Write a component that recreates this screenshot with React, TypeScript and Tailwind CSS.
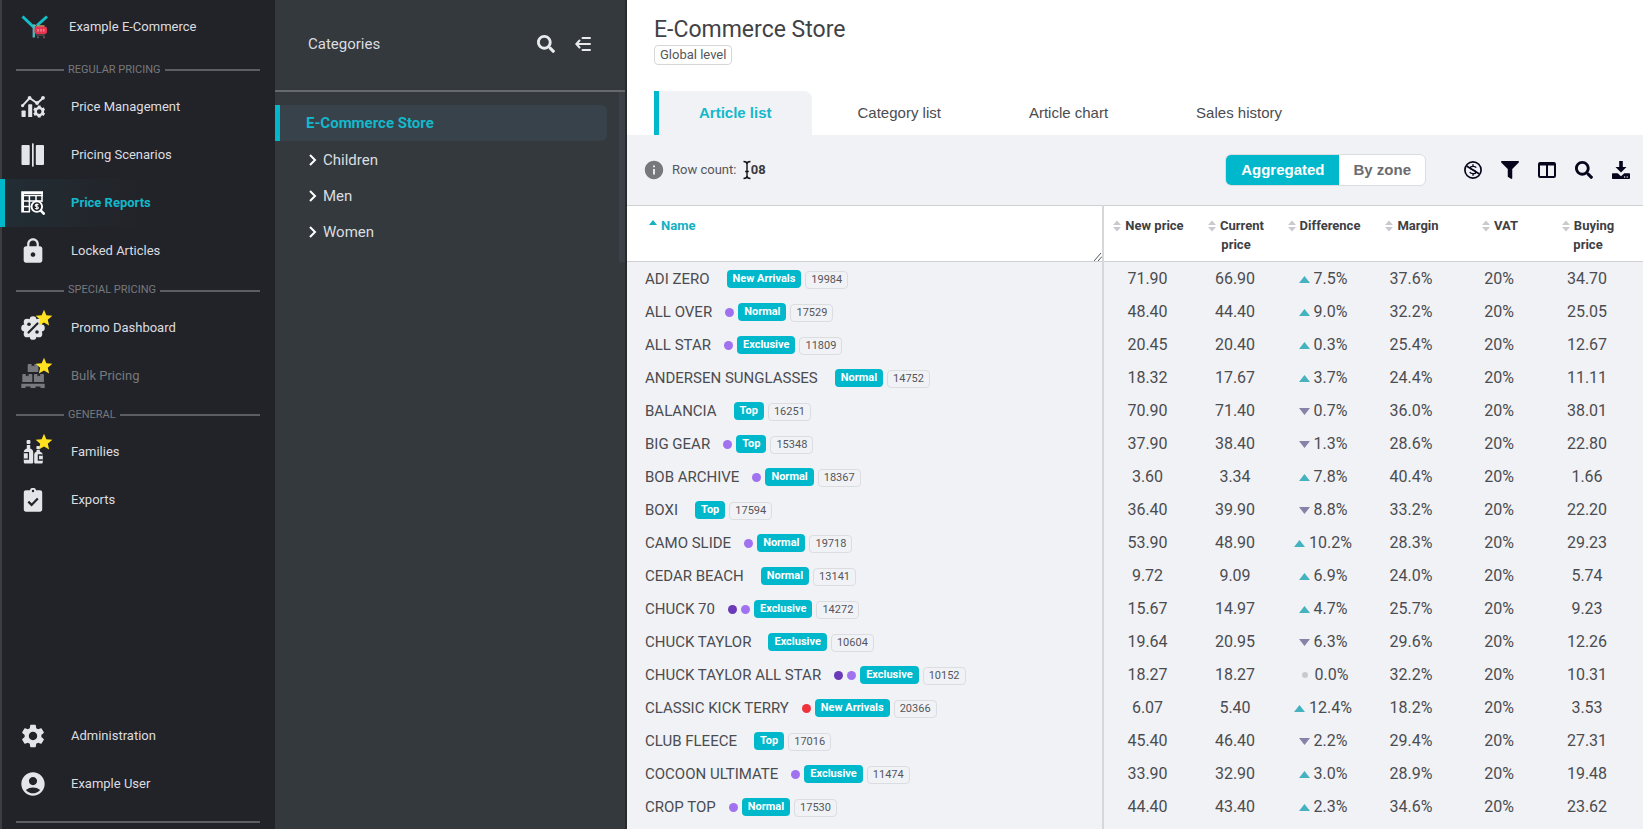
import React from 'react';
import { FaSearch, FaFilter } from 'react-icons/fa';
import { MdAccountCircle, MdLock, MdSettings, MdInfo, MdStar } from 'react-icons/md';

type IconProps = { className?: string };

const LogoIcon: React.FC = () => (
    <svg viewBox="0 0 28 28" className="size-7" aria-hidden="true">
        <path d="M1.500 3.500 12.500 14M26 3.500 16 12.500" stroke="#12bfc9" strokeWidth="3" fill="none" />
        <path d="M12.800 12v12.500" stroke="#4fb3b9" strokeWidth="2.400" />
        <path d="M12 12h2.500l1 2.500" stroke="#b0b4b4" strokeWidth="1" fill="none" />
        <path d="M16 12.200h7.500v2H15z" fill="#b79a5c" />
        <rect x="13.500" y="13.500" width="12.500" height="7.500" rx="2.500" fill="#e5344f" />
        <path d="M17 16v2.600M20 16v2.600M22.800 16v2.600" stroke="#f7a9b5" strokeWidth="1" />
        <path d="M15 22h9" stroke="#6b5357" strokeWidth="1.200" />
        <circle cx="17" cy="24.200" r="1" fill="#63676b" />
        <circle cx="23" cy="24.200" r="1" fill="#63676b" />
    </svg>
);

const ChartGearIcon: React.FC<IconProps> = ({ className }) => (
    <svg viewBox="0 0 24 24" className={className} fill="currentColor" aria-hidden="true">
        <rect x="0.500" y="15.500" width="4.200" height="6.500" rx="0.800" />
        <path d="M7.800 9.200h2.400c.6 0 1 .4 1 1V22H7.200V10c0-.5.3-.8.6-.8Z" />
        <path d="M1.300 10.800 8.600 3l7.600 5.200L22.300 2.800" fill="none" stroke="currentColor" strokeWidth="1.900" />
        <circle cx="8.600" cy="2.800" r="1.900" />
        <circle cx="16" cy="8" r="1.900" />
        <circle cx="22" cy="2.800" r="1.900" />
        <circle cx="1.600" cy="10.600" r="1.600" />
        <circle cx="18.200" cy="16.600" r="3.600" fill="none" stroke="currentColor" strokeWidth="2.600" />
        <path
            d="M18.200 10.600v2.200M18.200 20.400v2.200M13 13.600l1.900 1.100M21.500 18.500l1.900 1.100M13 19.600l1.900-1.100M21.500 14.700l1.900-1.100"
            stroke="currentColor"
            strokeWidth="3"
        />
    </svg>
);

const ScenariosIcon: React.FC<IconProps> = ({ className }) => (
    <svg viewBox="0 0 24 24" className={className} fill="currentColor" aria-hidden="true">
        <rect x="0.500" y="2" width="8.200" height="20" rx="1" />
        <rect x="11" y="0.300" width="1.700" height="23.400" rx="0.600" />
        <rect x="14.800" y="2" width="8.200" height="20" rx="1" />
    </svg>
);

const ReportIcon: React.FC<IconProps> = ({ className }) => (
    <svg viewBox="0 0 24 24" className={className} fill="none" stroke="currentColor" aria-hidden="true">
        <path d="M1.600 21.500V1.600H22" strokeWidth="2.800" />
        <path d="M3 20.800h6M3 15.500h6.500M3 10h18M8.400 4v17M15 4v5.500M21 1v10M3 4.500h19" strokeWidth="1.500" />
        <circle cx="15.800" cy="15.600" r="5.300" strokeWidth="1.900" fill="#222328" />
        <path d="m19.600 19.400 4 4" strokeWidth="2.600" />
        <path d="M17.400 14c-.4-.8-3.200-1-3.200.4s3.200.9 3.200 2.400-2.900 1.300-3.300.3M15.800 12.400v6.400" strokeWidth="1.100" />
    </svg>
);

const PercentIcon: React.FC<IconProps> = ({ className }) => (
    <svg viewBox="0 0 24 24" className={className} aria-hidden="true">
        <g fill="currentColor">
            <circle cx="12" cy="12" r="9.400" />
            <circle cx="12" cy="3.600" r="3.400" />
            <circle cx="17.900" cy="6.100" r="3.400" />
            <circle cx="20.400" cy="12" r="3.400" />
            <circle cx="17.900" cy="17.900" r="3.400" />
            <circle cx="12" cy="20.400" r="3.400" />
            <circle cx="6.100" cy="17.900" r="3.400" />
            <circle cx="3.600" cy="12" r="3.400" />
            <circle cx="6.100" cy="6.100" r="3.400" />
        </g>
        <path d="m7.500 16.500 9-9" stroke="#222328" strokeWidth="2.200" strokeLinecap="round" />
        <circle cx="8" cy="8.200" r="1.800" fill="#222328" />
        <circle cx="16" cy="16" r="1.800" fill="#222328" />
    </svg>
);

const PalletIcon: React.FC<IconProps> = ({ className }) => (
    <svg viewBox="0 0 24 24" className={className} fill="currentColor" aria-hidden="true">
        <path d="M7.600 0h3v2.400l1.400-.8 1.400.8V0h3c.5 0 .9.4.9.9v7.200H6.700V.9c0-.5.4-.9.9-.9Z" />
        <path d="M2.200 10h2.600v2.400l1.400-.8 1.400.8V10h2.800c.5 0 .9.4.9.9V18h-10v-7.100c0-.5.4-.9.9-.9Z" />
        <path d="M13.800 10h2.600v2.400l1.400-.8 1.400.8V10H22c.5 0 .9.4.9.9V18h-10v-7.100c0-.5.4-.9.9-.9Z" />
        <path d="M.3 19.800h23.400V24h-4.200v-1.400h-5V24h-5v-1.400h-5V24H.3Z" />
    </svg>
);

const BottlesIcon: React.FC<IconProps> = ({ className }) => (
    <svg viewBox="0 0 24 24" className={className} aria-hidden="true">
        <g fill="currentColor">
            <rect x="5.600" y="0" width="3.800" height="4" rx="1" />
            <path d="M5.800 5h3.400v3.600c2.200.8 3 2 3 4V22c0 1-.6 1.600-1.600 1.600H4.400c-1 0-1.600-.6-1.600-1.600v-9.400c0-2 .8-3.200 3-4Z" />
            <rect x="15.400" y="6" width="3.600" height="3.200" rx="0.800" />
            <path d="M15.600 10h3.200v1.600c2 .8 3 1.800 3 3.600V22c0 1-.6 1.600-1.600 1.600h-5.600c-1 0-1.400-.6-1.400-1.600v-6.800c0-1.800.4-2.800 2.400-3.600Z" />
        </g>
        <path d="M2.800 12.600h4.600v6.600H2.800M21.800 15h-4.400v5h4.400" fill="none" stroke="#222328" strokeWidth="1.300" />
    </svg>
);

const ClipboardIcon: React.FC<IconProps> = ({ className }) => (
    <svg viewBox="0 0 24 24" className={className} aria-hidden="true">
        <path
            d="M5 2.200h3.900a3.200 3.200 0 0 1 6.200 0H19c1.300 0 2.200.9 2.200 2.200v17.200c0 1.300-.9 2.200-2.200 2.200H5c-1.300 0-2.200-.9-2.200-2.200V4.400c0-1.300.9-2.200 2.200-2.200Z"
            fill="currentColor"
        />
        <circle cx="12" cy="3" r="1.200" fill="#222328" />
        <path d="m7.300 13.600 3.300 3.300 6.200-6.400" fill="none" stroke="#222328" strokeWidth="2.200" />
    </svg>
);

const CollapseIcon: React.FC = () => (
    <svg viewBox="0 0 16 16" className="size-4" fill="none" stroke="currentColor" strokeWidth="2" strokeLinecap="round" aria-hidden="true">
        <path d="M7.500 2H15M2 8h13M7.500 14H15M4.500 4.500 1.300 8l3.200 3.500" />
    </svg>
);

const ChevronIcon: React.FC = () => (
    <svg viewBox="0 0 8 12" className="h-3 w-2" fill="none" stroke="#fff" strokeWidth="2" aria-hidden="true">
        <path d="m1 1 5 5-5 5" />
    </svg>
);

const CurrencyOffIcon: React.FC = () => (
    <svg viewBox="0 0 18 18" className="size-[18px]" fill="none" stroke="currentColor" aria-hidden="true">
        <circle cx="9" cy="9" r="8.100" strokeWidth="1.700" />
        <path d="m2.600 5 12.800 8" strokeWidth="1.500" />
        <path d="M12.200 6.600C11.500 5 6.400 4.700 6.200 6.900c-.1 2 5.800 1.900 5.700 4.200-.2 2.200-5.200 2-6.100-.1M9 3.200v2.200M9 12.600v2.200" strokeWidth="1.400" />
    </svg>
);

const ColumnsIcon: React.FC = () => (
    <svg viewBox="0 0 18 18" className="size-[18px]" fill="none" stroke="currentColor" aria-hidden="true">
        <rect x="1" y="2" width="16" height="14" rx="1.200" strokeWidth="2" />
        <path d="M1 3.200h16" strokeWidth="2.600" />
        <path d="M9 3v13" strokeWidth="2" />
    </svg>
);

const DownloadIcon: React.FC = () => (
    <svg viewBox="0 0 18 18" className="size-[18px]" fill="currentColor" aria-hidden="true">
        <path d="M7.200 0h3.600v6h3.700L9 11.600 3.500 6h3.700Z" />
        <path d="M1 12.200h4.700L9 15.200l3.300-3H17c.6 0 1 .4 1 1V17c0 .6-.4 1-1 1H1c-.6 0-1-.4-1-1v-3.800c0-.6.4-1 1-1Z" />
        <circle cx="12.600" cy="16" r="0.700" fill="#f1f2f6" />
        <circle cx="15.200" cy="16" r="0.700" fill="#f1f2f6" />
    </svg>
);

const TextCursor: React.FC = () => (
    <svg viewBox="0 0 10 20" className="absolute -left-px top-0 h-5 w-2.5" fill="none" aria-hidden="true">
        <path d="M5 3v14" stroke="#f1f2f6" strokeWidth="7" />
        <path d="M1.500 1.500C4 1.500 5 2 5 4v12c0 2-1 2.500-3.500 2.500M8.500 1.500C6 1.500 5 2 5 4v12c0 2 1 2.500 3.500 2.500M3.200 11.500h3.600" stroke="#111" strokeWidth="1.400" />
    </svg>
);

const SortIcon: React.FC = () => (
    <svg viewBox="0 0 8 12" className="mr-1 inline-block h-3 w-2 align-[-2px]" fill="#c9cacd" aria-hidden="true">
        <path d="M4 0.500 8 5H0ZM4 11.500 0 7h8Z" />
    </svg>
);

const SectionTitle: React.FC<{ children: string; className?: string }> = ({ children, className = 'h-7' }) => (
    <div className={`${className} flex items-center gap-1 pl-4 pr-[15px] pt-0.5 text-[11px] text-[#77797d]`}>
        <span className="h-0.5 w-12 bg-[#5c5e62]" />
        <span>{children}</span>
        <span className="h-0.5 flex-1 bg-[#5c5e62]" />
    </div>
);

type NavItemProps = {
    icon: React.ReactNode;
    label: string;
    active?: boolean;
    star?: boolean;
    disabled?: boolean;
};

const NavItem: React.FC<NavItemProps> = ({ icon, label, active, star, disabled }) => {
    const tone = active
        ? 'border-[#00b8cb] bg-linear-to-r from-[#222d34] to-transparent to-50% font-bold text-[#14b8cb]'
        : disabled
          ? 'border-transparent text-[#77797d]'
          : 'border-transparent text-[#dcdde0]';
    return (
        <a href="#" aria-disabled={disabled} className={`flex h-12 items-center gap-[26px] border-l-5 pl-4 text-[13px] ${tone}`}>
            <span className={`relative ${disabled ? 'text-[#77797d]' : active ? 'text-white' : 'text-[#e4e5e8]'}`}>
                {icon}
                {star && <MdStar className="absolute -right-[9px] -top-2 size-5 text-[#ffe11f]" />}
            </span>
            {label}
        </a>
    );
};

const Sidebar: React.FC = () => (
    <nav className="flex w-[275px] shrink-0 flex-col bg-[#222328] shadow-[inset_2px_0_#3b3d41]">
        <div className="flex h-[55px] items-center gap-5 pb-0.5 pl-[21px] text-[13px] text-[#dcdde0]">
            <LogoIcon />
            <span>Example E-Commerce</span>
        </div>
        <SectionTitle>REGULAR PRICING</SectionTitle>
        <NavItem icon={<ChartGearIcon className="size-6" />} label="Price Management" />
        <NavItem icon={<ScenariosIcon className="size-6" />} label="Pricing Scenarios" />
        <NavItem icon={<ReportIcon className="size-6" />} label="Price Reports" active />
        <NavItem icon={<MdLock className="-m-0.5 size-7" />} label="Locked Articles" />
        <SectionTitle className="h-[29px]">SPECIAL PRICING</SectionTitle>
        <NavItem icon={<PercentIcon className="size-6" />} label="Promo Dashboard" star />
        <NavItem icon={<PalletIcon className="size-6" />} label="Bulk Pricing" star disabled />
        <SectionTitle>GENERAL</SectionTitle>
        <NavItem icon={<BottlesIcon className="size-6" />} label="Families" star />
        <NavItem icon={<ClipboardIcon className="size-6" />} label="Exports" />
        <div className="mt-auto">
            <NavItem icon={<MdSettings className="-m-0.5 size-7" />} label="Administration" />
            <NavItem icon={<MdAccountCircle className="-m-0.5 size-7" />} label="Example User" />
            <hr className="mb-1.5 ml-4 mr-[15px] mt-[13px] border-t-2 border-[#5c5e62]" />
        </div>
    </nav>
);

const Categories: React.FC = () => (
    <aside className="flex w-[352px] shrink-0 flex-col border-r-2 border-[#272b2e] bg-[#33393c] text-[#dcdde0]">
        <div className="flex h-[92px] items-center border-b-2 border-[#66696d] pb-0.5 pl-[33px] pr-[34px]">
            <h2 className="flex-1 text-[15px]">Categories</h2>
            <button type="button" aria-label="Search categories" className="mr-5 text-[#e9eaec]">
                <FaSearch className="size-[18px]" />
            </button>
            <button type="button" aria-label="Collapse" className="text-[#e9eaec]">
                <CollapseIcon />
            </button>
        </div>
        <div className="flex flex-1">
            <ul className="mr-3 mt-[13px] flex-1 text-[15px]">
                <li>
                    <a href="#" className="flex h-9 items-center rounded-r-md border-l-5 border-[#00b8cb] bg-[#37424a] pl-[26px] pt-px font-bold text-[#14b8cb]">
                        E-Commerce Store
                    </a>
                </li>
                {['Children', 'Men', 'Women'].map((name) => (
                    <li key={name}>
                        <a href="#" className="flex h-9 items-center gap-1.5 pl-[34px] pt-0.5">
                            <ChevronIcon />
                            {name}
                        </a>
                    </li>
                ))}
            </ul>
            <span className="h-[170px] w-1.5 bg-[#3c4048]" />
        </div>
    </aside>
);

const tabs = ['Article list', 'Category list', 'Article chart', 'Sales history'];

const Tabs: React.FC = () => (
    <div role="tablist" className="flex pl-[27px] font-['Liberation_Sans',Arial,sans-serif] text-[15px]">
        {tabs.map((tab, i) => (
            <button
                key={tab}
                type="button"
                role="tab"
                aria-selected={i === 0}
                className={
                    i === 0
                        ? 'mr-0.5 h-11 rounded-tr-lg border-l-5 border-[#00b8cb] bg-[#f1f2f6] px-10 font-bold text-[#14b8cb]'
                        : 'h-11 px-11 text-[#4b4c50]'
                }
            >
                {tab}
            </button>
        ))}
    </div>
);

const Toolbar: React.FC = () => (
    <div className="flex h-[70px] items-center bg-[#f1f2f6] pl-4 pr-[13px]">
        <MdInfo className="size-[22px] text-[#77787b]" />
        <span className="ml-[7px] text-[13px]/5 text-[#55565a]">Row count:</span>
        <span className="relative ml-[7px] text-[13px]/5 font-bold text-[#3b3c40]">
            108
            <TextCursor />
        </span>
        <div className="ml-auto mr-[38px] flex h-8 overflow-hidden rounded-md border border-[#dcdde1] bg-white font-['Liberation_Sans',Arial,sans-serif] text-[15px] font-bold">
            <button type="button" className="bg-[#00b8cb] px-[15px] text-white">Aggregated</button>
            <button type="button" className="px-3.5 text-[#6b6c71]">By zone</button>
        </div>
        <div className="flex items-center gap-[19px] text-[#07061d]">
            <button type="button" aria-label="Currency"><CurrencyOffIcon /></button>
            <button type="button" aria-label="Filter"><FaFilter className="size-[18px]" /></button>
            <button type="button" aria-label="Columns"><ColumnsIcon /></button>
            <button type="button" aria-label="Search"><FaSearch className="size-[18px]" /></button>
            <button type="button" aria-label="Download"><DownloadIcon /></button>
        </div>
    </div>
);

type Dot = 'light' | 'dark' | 'red';
type Row = [name: string, dots: Dot[], tag: string, code: string, next: string, current: string, diff: string, dir: 'up' | 'down' | 'flat', margin: string, buying: string];

const rows: Row[] = [
    ['ADI ZERO', [], 'New Arrivals', '19984', '71.90', '66.90', '7.5%', 'up', '37.6%', '34.70'],
    ['ALL OVER', ['light'], 'Normal', '17529', '48.40', '44.40', '9.0%', 'up', '32.2%', '25.05'],
    ['ALL STAR', ['light'], 'Exclusive', '11809', '20.45', '20.40', '0.3%', 'up', '25.4%', '12.67'],
    ['ANDERSEN SUNGLASSES', [], 'Normal', '14752', '18.32', '17.67', '3.7%', 'up', '24.4%', '11.11'],
    ['BALANCIA', [], 'Top', '16251', '70.90', '71.40', '0.7%', 'down', '36.0%', '38.01'],
    ['BIG GEAR', ['light'], 'Top', '15348', '37.90', '38.40', '1.3%', 'down', '28.6%', '22.80'],
    ['BOB ARCHIVE', ['light'], 'Normal', '18367', '3.60', '3.34', '7.8%', 'up', '40.4%', '1.66'],
    ['BOXI', [], 'Top', '17594', '36.40', '39.90', '8.8%', 'down', '33.2%', '22.20'],
    ['CAMO SLIDE', ['light'], 'Normal', '19718', '53.90', '48.90', '10.2%', 'up', '28.3%', '29.23'],
    ['CEDAR BEACH', [], 'Normal', '13141', '9.72', '9.09', '6.9%', 'up', '24.0%', '5.74'],
    ['CHUCK 70', ['dark', 'light'], 'Exclusive', '14272', '15.67', '14.97', '4.7%', 'up', '25.7%', '9.23'],
    ['CHUCK TAYLOR', [], 'Exclusive', '10604', '19.64', '20.95', '6.3%', 'down', '29.6%', '12.26'],
    ['CHUCK TAYLOR ALL STAR', ['dark', 'light'], 'Exclusive', '10152', '18.27', '18.27', '0.0%', 'flat', '32.2%', '10.31'],
    ['CLASSIC KICK TERRY', ['red'], 'New Arrivals', '20366', '6.07', '5.40', '12.4%', 'up', '18.2%', '3.53'],
    ['CLUB FLEECE', [], 'Top', '17016', '45.40', '46.40', '2.2%', 'down', '29.4%', '27.31'],
    ['COCOON ULTIMATE', ['light'], 'Exclusive', '11474', '33.90', '32.90', '3.0%', 'up', '28.9%', '19.48'],
    ['CROP TOP', ['light'], 'Normal', '17530', '44.40', '43.40', '2.3%', 'up', '34.6%', '23.62'],
];

const dotColors: Record<Dot, string> = {
    light: 'bg-[#a072f0]',
    dark: 'bg-[#6a3ab8]',
    red: 'bg-[#f0323c]',
};

const Trend: React.FC<{ dir: Row[7] }> = ({ dir }) => {
    if (dir === 'flat') return <span className="ml-1 mr-[7px] inline-block size-1.5 rounded-full bg-[#c9cacd] align-[2px]" />;
    return (
        <svg viewBox="0 0 11 7" className="mr-1 inline-block h-[7px] w-[11px] align-[1px]" aria-hidden="true">
            {dir === 'up' ? <path d="M5.500 0 11 7H0Z" fill="#45b3bf" /> : <path d="M0 0h11L5.500 7Z" fill="#8583a8" />}
        </svg>
    );
};

const ArticleTable: React.FC = () => (
    <table className="w-full table-fixed border-collapse text-[#4b4c50]">
        <colgroup>
            <col />
            {[0, 1, 2, 3, 4, 5].map((i) => (
                <col key={i} className="w-[88px]" />
            ))}
            <col className="w-3" />
        </colgroup>
        <thead>
            <tr className="h-14 border-y border-[#cfd0d3] bg-white align-top text-[13px] leading-[19px]">
                <th className="relative border-r-2 border-[#d6d7da] pl-[22px] pt-2.5 text-left font-bold text-[#14b0c3]">
                    <svg viewBox="0 0 8 5" className="mr-1 inline-block h-[5px] w-2 align-[5px]" fill="#14b0c3" aria-hidden="true">
                        <path d="M4 0 8 5H0Z" />
                    </svg>
                    Name
                    <svg viewBox="0 0 8 8" className="absolute bottom-0 right-0 size-2" stroke="#55565a" aria-hidden="true">
                        <path d="m0 8 7-8M4 8l4-4.500" />
                    </svg>
                </th>
                {['New price', 'Current price', 'Difference', 'Margin', 'VAT', 'Buying price'].map((title) => (
                    <th key={title} className="pl-1.5 pr-1 pt-2.5 font-bold text-[#3f4044]">
                        <SortIcon />
                        {title}
                    </th>
                ))}
                <th />
            </tr>
        </thead>
        <tbody>
            {rows.map(([name, dots, tag, code, next, current, diff, dir, margin, buying]) => (
                <tr key={code} className="h-[33px] text-center text-base *:pt-0.5">
                    <td className="border-r-2 border-[#d6d7da] pl-[18px]">
                        <div className="flex items-center whitespace-nowrap text-[15px]">
                            <span className="mr-[13px]">{name}</span>
                            {dots.map((dot) => (
                                <span key={dot} className={`mr-1 size-[9px] rounded-full ${dotColors[dot]}`} />
                            ))}
                            <span className={`${dots.length ? '' : 'ml-1'} rounded bg-[#00b8cb] px-1.5 text-[11px] leading-[18px] font-bold text-white`}>{tag}</span>
                            <span className="ml-1 mt-0.5 rounded border border-[#dcdde0] px-[5px] text-[11px] leading-4 text-[#55565a]">{code}</span>
                        </div>
                    </td>
                    <td>{next}</td>
                    <td>{current}</td>
                    <td>
                        <Trend dir={dir} />
                        {diff}
                    </td>
                    <td>{margin}</td>
                    <td>20%</td>
                    <td>{buying}</td>
                    <td />
                </tr>
            ))}
            <tr className="h-[33px]">
                <td className="border-r-2 border-[#d6d7da]" />
                <td colSpan={7} />
            </tr>
        </tbody>
    </table>
);

export default function App() {
    return (
        <div className="flex h-screen overflow-hidden bg-white font-[Roboto,sans-serif]">
            <Sidebar />
            <Categories />
            <main className="min-w-0 flex-1 bg-[#f1f2f6]">
                <div className="bg-white">
                    <header className="h-[91px] pl-[27px] pt-4">
                        <h1 className="text-[23px] leading-7 text-[#414246]">E-Commerce Store</h1>
                        <p className="mt-px w-fit rounded border border-[#d6d7da] px-[5px] text-[13px] leading-[18px] text-[#55565a]">Global level</p>
                    </header>
                    <Tabs />
                </div>
                <Toolbar />
                <ArticleTable />
            </main>
        </div>
    );
}
